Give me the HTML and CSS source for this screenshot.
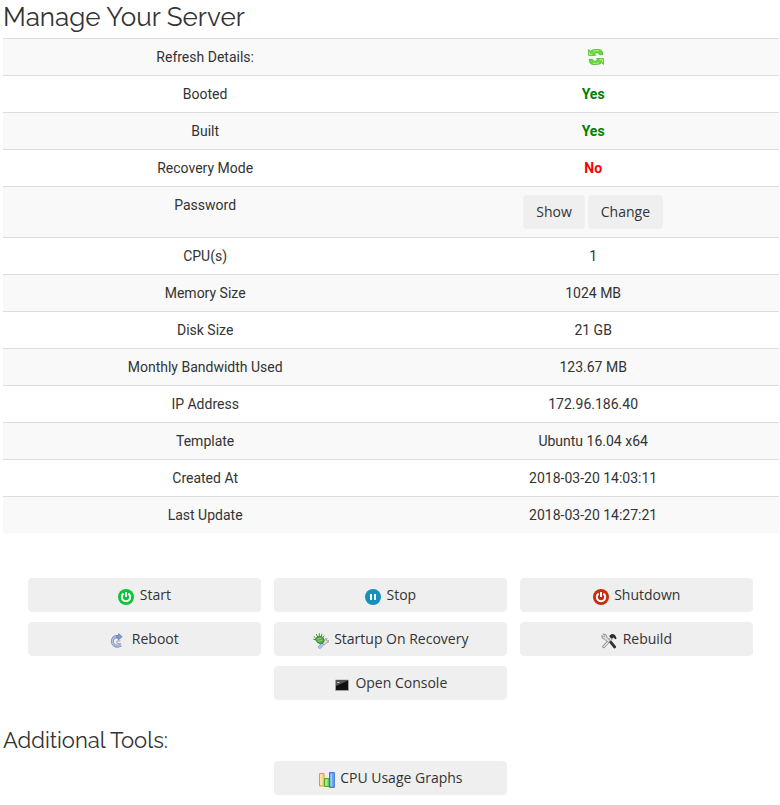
FILE: index.html
```
<!DOCTYPE html>
<html lang="en">
<head>
    <meta charset="UTF-8">
    <meta name="viewport" content="width=device-width, initial-scale=1.0">
    <title>Manage Your Server</title>
    <link rel="stylesheet" href="styles.css">
</head>
<body>
    <h2 class="page-title">Manage Your Server</h2>

    <table class="details">
        <tr>
            <th scope="row">Refresh Details:</th>
            <td>
                <a href="#" class="refresh" aria-label="Refresh">
                    <svg class="icon" viewBox="0 0 16 16">
                        <g fill="#66dc35" stroke="#45b527" stroke-width=".7" stroke-linejoin="round">
                            <path d="M.5.6 2.3 2.2Q4.500.4 7.500.5h3.700q3.500.3 3.700 5.200h-3.500Q11.200 3.900 9.500 3.800 7.400 3.800 6.300 4.900L7.600 6.400H.5z"/>
                            <path d="m15.500 15.400-1.800-1.600q-2.200 1.800-5.200 1.700H4.800q-3.500-.3-3.700-5.200h3.500q.2 1.800 1.900 1.900 2.100 0 3.200-1.100L8.400 9.600h7.100z"/>
                        </g>
                        <path fill="none" stroke="#b0f486" d="M1.500 2.700v2.700h3M5 2.400q2-.9 6-.7M14.500 13.300v-2.700h-3M11 13.600q-2 .9-6 .7"/>
                    </svg>
                </a>
            </td>
        </tr>
        <tr>
            <th scope="row">Booted</th>
            <td><strong class="yes">Yes</strong></td>
        </tr>
        <tr>
            <th scope="row">Built</th>
            <td><strong class="yes">Yes</strong></td>
        </tr>
        <tr>
            <th scope="row">Recovery Mode</th>
            <td><strong class="no">No</strong></td>
        </tr>
        <tr>
            <th scope="row">Password</th>
            <td class="password">
                <button type="button" class="btn">Show</button>
                <button type="button" class="btn">Change</button>
            </td>
        </tr>
        <tr>
            <th scope="row">CPU(s)</th>
            <td>1</td>
        </tr>
        <tr>
            <th scope="row">Memory Size</th>
            <td>1024 MB</td>
        </tr>
        <tr>
            <th scope="row">Disk Size</th>
            <td>21 GB</td>
        </tr>
        <tr>
            <th scope="row">Monthly Bandwidth Used</th>
            <td>123.67 MB</td>
        </tr>
        <tr>
            <th scope="row">IP Address</th>
            <td>172.96.186.40</td>
        </tr>
        <tr>
            <th scope="row">Template</th>
            <td>Ubuntu 16.04 x64</td>
        </tr>
        <tr>
            <th scope="row">Created At</th>
            <td>2018-03-20 14:03:11</td>
        </tr>
        <tr>
            <th scope="row">Last Update</th>
            <td>2018-03-20 14:27:21</td>
        </tr>
    </table>

    <!-- Power and recovery actions -->
    <div class="actions">
        <button type="button" class="btn">
            <svg class="icon" viewBox="0 0 16 16">
                <circle cx="8" cy="8" r="8" fill="#0bc638"/>
                <path d="M5.6 4.6a4.2 4.2 0 1 0 4.8 0M8 3v5" fill="none" stroke="#fff" stroke-width="2"/>
            </svg>
            Start
        </button>
        <button type="button" class="btn">
            <svg class="icon" viewBox="0 0 16 16">
                <circle cx="8" cy="8" r="8" fill="#1590bf"/>
                <path d="M5 5h2v6H5zM9 5h2v6H9z" fill="#fff"/>
            </svg>
            Stop
        </button>
        <button type="button" class="btn">
            <svg class="icon" viewBox="0 0 16 16">
                <circle cx="8" cy="8" r="8" fill="#c92c0c"/>
                <path d="M5.6 4.6a4.2 4.2 0 1 0 4.8 0M8 3v5" fill="none" stroke="#fff" stroke-width="2"/>
            </svg>
            Shutdown
        </button>
        <button type="button" class="btn">
            <svg class="icon" viewBox="0 0 16 16">
                <path d="M9.5 4Q5 2.400 2.900 6 1.300 9.800 4.300 12.200q3.300 2 6.700-.2" fill="none" stroke="#7d90bd" stroke-width="3"/>
                <path d="M9.500 4Q5 2.400 2.900 6 1.300 9.800 4.300 12.200q3.300 2 6.700-.2" fill="none" stroke="#b3c2e2" stroke-width="1.400"/>
                <path d="M8.600.6 12.200 3.800 8.400 7V5.200H6.600V2.600h2z" fill="#8499cc" stroke="#5c71a8" stroke-width=".6"/>
                <path d="M10.500 7.800H8.200q-1.800.3-1.400 1.800.5 1.200 2 1H11" fill="none" stroke="#a3aec4" stroke-width="1.200"/>
            </svg>
            Reboot
        </button>
        <button type="button" class="btn">
            <svg class="icon" viewBox="0 0 16 16">
                <path d="m9 9.500 2.500-2.200q.3-2.200 2.700-1.800l-1 1.600.9 1 1.500-.7q.4 2.600-2.200 2.700L11 12z" fill="#ddd" stroke="#8c8c8c" stroke-width=".7"/>
                <path d="m8.800 10 2 2-3.100 3.100q-1.200.7-2-.1t.1-2z" fill="#a9cdf8" stroke="#6b97d8" stroke-width=".7"/>
                <path d="m.8 3.200 2.400 2.600M3.300 1l1.300 3M6.300.3v3.400M9 .8 8 4M11.300 2.600 9.500 5M.3 6.200l2.700.6" fill="none" stroke="#4b8f3a"/>
                <path d="M2.500 6.500Q3.500 3.200 7 3.300q3.800.3 4.200 3.900-.2 3.500-3.600 3.700-3.600-.4-5.100-4.400z" fill="#58a944" stroke="#3a7f2d" stroke-width=".8"/>
                <path d="M4.200 6.200 8.500 5M5 8.300l4.500-1.200" stroke="#93d277"/>
            </svg>
            Startup On Recovery
        </button>
        <button type="button" class="btn">
            <svg class="icon" viewBox="0 0 16 16">
                <path d="m8.500 7.600 5.200 6.400" stroke="#333" stroke-width="2.800" stroke-linecap="round"/>
                <path d="m10.800 4.800-8.200 9" stroke="#888" stroke-width="2.800" stroke-linecap="round"/>
                <path d="m10.400 5.300-7.600 8.300" stroke="#eee" stroke-width="1.400" stroke-linecap="round"/>
                <path d="M2.200.8 4 2.800 2.700 4 .7 2.400Q.3 5.900 3.800 6.500L7.500 9.500l1.700-1.700L6.200 4.500Q6 1 2.200.8z" fill="#ddd" stroke="#777" stroke-width=".7"/>
                <path d="m8.200 3 2-1.800q3-.7 4.400 1.700l1 2.600-1.500.7-1.400-1.600-1.300.1-1 1.100z" fill="#2b2b2b"/>
            </svg>
            Rebuild
        </button>
        <button type="button" class="btn middle">
            <svg class="icon" viewBox="0 0 16 16">
                <path d="M1.500 3h13v10.500h-13z" fill="#111" stroke="#aaa" stroke-width=".8"/>
                <path d="M2 3.500h12L2 9z" fill="#555"/>
                <path d="M3 5.500h2.500" stroke="#ddd" stroke-width=".8"/>
            </svg>
            Open Console
        </button>
    </div>

    <h3 class="section-title">Additional Tools:</h3>
    <div class="actions">
        <button type="button" class="btn middle">
            <svg class="icon" viewBox="0 0 16 16">
                <path d="M.5 1.500h4.500v12.500H.5z" fill="#fbd78a" stroke="#dd9d3c"/>
                <path d="M5.500 6.500h4.500v8H5.500z" fill="#8be05f" stroke="#45b02c"/>
                <path d="M10.500.6h4.800v14.800h-4.800z" fill="#6aa8f2" stroke="#3472c8"/>
                <path d="M2 2.500v10.500M7 7.500v6M12.200 1.800v12.400" stroke="#fff" stroke-opacity=".55"/>
            </svg>
            CPU Usage Graphs
        </button>
    </div>
</body>
</html>
```
FILE: styles.css
```
* {
    box-sizing: border-box;
}

body {
    margin: 0;
    padding: 0 1px 10px 3px;
    background: #fff;
    color: #333;
    font-family: Roboto, Arial, sans-serif;
    font-size: 14px;
    line-height: 20px;
}

.page-title,
.section-title {
    margin: 0;
    font-family: Raleway, Lato, sans-serif;
    font-weight: 400;
}

.page-title {
    padding: 1px 0 5px;
    font-size: 26px;
    line-height: 32px;
}

.section-title {
    margin: 27px 0 8px;
    font-size: 22px;
    line-height: 26px;
}

/* Server details */
.details {
    width: 100%;
    table-layout: fixed;
    border-collapse: separate;
    border-spacing: 0;
    text-align: center;
}

.details tr:nth-child(odd) {
    background: #f9f9f9;
}

.details th,
.details td {
    padding: 8px;
    border-top: 1px solid #ddd;
    vertical-align: top;
}

.details th {
    width: 52.1%;
    font-weight: 400;
}

.refresh {
    margin-left: 6px;
}

.refresh .icon {
    margin: -1px 0 1px;
}

.yes {
    color: #008000;
}

.no {
    color: #f00;
}

/* Buttons */
.btn {
    padding: 6px 12px;
    border: 1px solid #efefef;
    border-radius: 4px;
    background: #efefef;
    color: #333;
    font-family: "Open Sans", sans-serif;
    font-size: 14px;
    line-height: 20px;
    cursor: pointer;
}

.btn:hover {
    border-color: #e2e2e2;
    background: #e2e2e2;
}

.password {
    font-size: 0;
}

.password .btn + .btn {
    margin-left: 3px;
}

.icon {
    width: 16px;
    height: 16px;
    vertical-align: middle;
}

.btn .icon {
    margin: 1px 2px -1px 0;
}

.actions {
    display: grid;
    grid-template-columns: repeat(3, 1fr);
    gap: 10px 13px;
    margin: 0 26px 0 25px;
}

.details + .actions {
    margin-top: 45px;
}

.middle {
    grid-column: 2;
}
```
